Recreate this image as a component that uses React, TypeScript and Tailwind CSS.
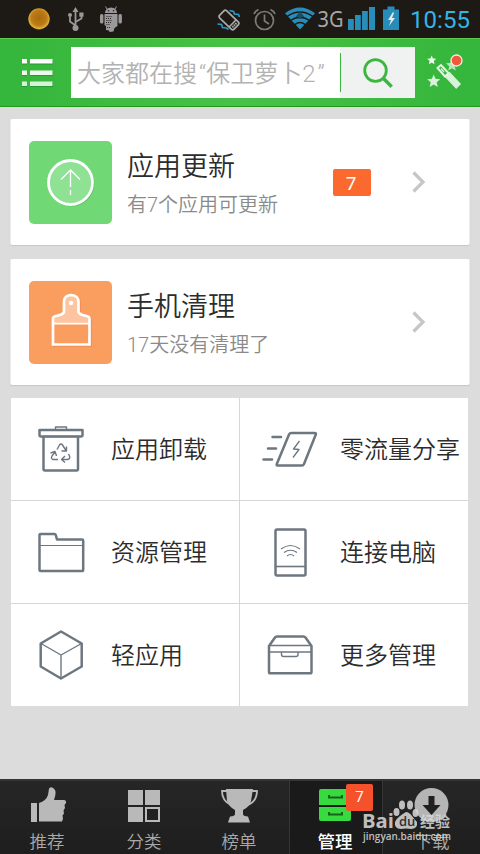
import React from "react";

const FONT = "font-['Roboto','Noto_Sans_CJK_SC',sans-serif]";

function StatusBar() {
  return (
    <div className="h-[38px] shrink-0 bg-[#1d1915]">
      <svg width="480" height="38" viewBox="0 0 480 38" fill="none">
        <defs>
          <radialGradient id="sun" cx="50%" cy="45%" r="55%">
            <stop offset="0" stopColor="#a96a12" />
            <stop offset="0.65" stopColor="#bd7c14" />
            <stop offset="0.9" stopColor="#e0b03a" />
            <stop offset="1" stopColor="#7a5a1c" />
          </radialGradient>
        </defs>
        <circle cx="39" cy="19" r="10.700" fill="url(#sun)" />
        <g stroke="#999" strokeWidth="1.800">
          <path d="M75.500 28V11M75.500 25.500l-5.500-4v-5M75.500 22l6-3.500v-3" />
        </g>
        <g fill="#999">
          <circle cx="75.500" cy="28" r="3" />
          <path d="M75.500 7l3 5h-6z" />
          <circle cx="70" cy="15" r="2" />
          <rect x="79.300" y="12.500" width="4.200" height="4.200" />
          <path d="M105 13a6 5.500 0 0 1 12 0z" />
          <rect x="100" y="14" width="3.400" height="9.500" rx="1.500" />
          <rect x="118.500" y="14" width="3.400" height="9.500" rx="1.500" />
          <path d="M104.500 14h13v12l-3 2-1 3.500-4 .5-.5-1.500-3-.5v-4l-1.500-1z" />
        </g>
        <path d="M107 9l-1.500-2.500M115 9l1.500-2.500" stroke="#999" strokeWidth="1" />
        <g fill="#2a2622">
          <circle cx="108.500" cy="10.700" r=".8" />
          <circle cx="113.500" cy="10.700" r=".8" />
        </g>
        <path d="M106.500 16.500h6M106 18.500h6M106.500 20.500h5M106 22.500h5M106.500 24.500h4M107 27.500h3" stroke="#2a2622" strokeDasharray="1 1" />
        <g transform="translate(229 20) rotate(-46)">
          <rect x="-5" y="-10" width="10" height="20" rx="2" stroke="#aaa" strokeWidth="1.700" />
          <path d="M-5 5H5" stroke="#aaa" strokeWidth="1.500" />
          <path d="M-3 7.500H3" stroke="#aaa" strokeWidth="2" strokeDasharray="1.500 .7" />
        </g>
        <path d="M229.500 10.500l4 1 1 2.500 4 .5 1 2.500M217.500 24l4 .5 1 3 4 .5 2 1.500" stroke="#2b9bc7" strokeWidth="1.700" />
        <g stroke="#7d7a77" strokeWidth="1.700">
          <circle cx="264.500" cy="20.500" r="9" />
          <path d="M264.500 14.500v6.500l4.500 3M254 14q1-3 4.500-4.500M275 14q-1-3-4.500-4.500" />
        </g>
        <path d="M300 29.500L285 13.200q15-11.400 30 0z" fill="#288eb9" />
        <path d="M287.500 16.200q12.500-8.500 25 0M291 20.200q9-6 18 0M295 24.300q5-3.400 10 0" stroke="#1d1915" strokeWidth="1.500" />
        <path d="M300 11l4.500 6h-3v2h-3v-2h-3z" fill="#174f65" />
        <text x="317.500" y="26.500" fill="#a8a6a4" fontFamily="Noto Sans" fontSize="22.500" textLength="26" lengthAdjust="spacingAndGlyphs">3G</text>
        <path d="M348 19h5.800v11H348zM355 15h5.800v15H355zM362 11h5.800v19H362zM369 7h6v23h-6z" fill="#288eb9" />
        <path d="M383 9.500h4.500V6.500h7v3h4.500V30h-16z" fill="#278cb8" />
        <path d="M393 12l-5 8h3l-2 6 6-8h-3l2-5z" fill="#e8e8e8" />
        <text x="410" y="27.500" fill="#33b5e5" fontFamily="Roboto" fontWeight="400" fontSize="24" textLength="60" lengthAdjust="spacing">10:55</text>
      </svg>
    </div>
  );
}

const STAR = "M0-5l1.400 3.300 3.600.3-2.700 2.400.8 3.600L0 2.700-3.100 4.600l.8-3.600L-5-1.400l3.600-.3z";

function Header() {
  return (
    <header className="flex h-[69px] shrink-0 items-start border-t border-b border-t-[#5dcc4d] border-b-[#219a1b] bg-linear-to-r from-[#34b53b] via-[#48c148] to-[#34b53b]">
      <svg className="mt-5 ml-5 shrink-0" width="36" height="32" viewBox="20 59 36 32">
        <g fill="#15852a" opacity=".55">
          <path d="M22 60h5v4.500h-5zM30 60h23v4.500H30zM22 71h5v5h-5zM30 71h23v5H30zM22 82h5v5h-5zM30 82h23v5H30z" />
        </g>
        <path d="M22 59h5v4.500h-5zM30 59h22.500v4.500H30z" fill="#fff" />
        <path d="M22 70.500h5V75h-5zM30 70.500h22.500V75H30z" fill="#eef9ee" />
        <path d="M22 81.500h5V86h-5zM30 81.500h22.500V86H30z" fill="#d8f1d9" />
      </svg>
      <div className="mt-2 ml-[15px] flex h-[51px] w-[344px]">
        <div className="flex w-[269px] items-center bg-white pt-0.5 pl-1.5">
          <span className="text-2xl leading-none font-[350] whitespace-nowrap text-[#b2b2b2]">
            大家都在搜<span className="pl-0.5">“</span>保卫萝卜<span className="tracking-[2px]">2”</span>
          </span>
        </div>
        <div className="flex flex-1 items-center bg-[#eff2f0]">
          <div className="h-[39px] w-px bg-[#3ab73e]" />
          <div className="flex flex-1 justify-center">
            <svg width="34" height="34" viewBox="0 0 34 34" fill="none" stroke="#3ab73e" strokeWidth="2.800">
              <circle cx="14.500" cy="14.500" r="10.800" />
              <path d="M22.500 22.500l8.200 8.300" strokeWidth="3.400" />
            </svg>
          </div>
        </div>
      </div>
      <svg className="mt-[11px] ml-3 shrink-0" width="38" height="44" viewBox="427 50 38 44">
        <g fill="#d9f3da">
          <path d={STAR} transform="translate(431.700 60) scale(.9)" fill="#f4fcf4" />
          <path d={STAR} transform="translate(433.700 81) scale(1.300)" />
          <path d={STAR} transform="translate(452 65) scale(1.200)" opacity=".8" />
          <path d="M444.500 76.500l5-4.800 11.500 12.300-4.800 5z" />
        </g>
        <path d="M437.500 68l3.500-3 7.500 8-3.500 3.500z" fill="#3cb843" stroke="#e4f6e4" strokeWidth="1.900" />
        <path d="M441 68.500l3 3.500" stroke="#e4f6e4" strokeWidth="1.200" />
        <circle cx="456.500" cy="60.500" r="5.500" fill="#f0593a" stroke="#eff5ec" strokeWidth="1.300" />
      </svg>
    </header>
  );
}

const UpdateIcon = () => (
  <svg width="83" height="83" viewBox="29 141 83 83" fill="none">
    <circle cx="71.500" cy="183.500" r="23" fill="#58c662" />
    <circle cx="70.500" cy="182.500" r="22" fill="#8fe294" stroke="#fff" strokeWidth="2.800" />
    <path d="M70.500 187v-17M61 179.500l9.500-9.500 9.500 9.500M70.500 190v5" stroke="#fff" strokeWidth="1.300" />
  </svg>
);

const BRUSH = "M64 301.500q0-6 7-6.500 7.500.5 7.500 7v9.500q0 2 3.500 3.200l6 1.800q1.500.5 1.500 2v26h-36.500v-26q0-1.500 1.500-2l6-1.800q3.500-1.200 3.500-3.200z";

const BrushIcon = () => (
  <svg width="83" height="83" viewBox="29 281 83 83" fill="none">
    <path d={BRUSH} transform="translate(1 1)" stroke="#e97c4e" strokeWidth="2.500" opacity=".6" />
    <path d={BRUSH} fill="#fa9e60" />
    <path d="M64 301.500q0-6 7-6.500 7.500.5 7.500 7v9.500q0 2 3.500 3.200l6 1.800q1.500.5 1.500 2v5h-36.500v-5q0-1.500 1.500-2l6-1.800q3.500-1.200 3.500-3.200z" fill="#fcc49f" />
    <path d={BRUSH} stroke="#fff" strokeWidth="2.700" />
    <path d="M53 323.700h37" stroke="#fff" strokeWidth="1.800" />
    <circle cx="71" cy="303" r="2.300" fill="#fff" />
  </svg>
);

const Chevron = () => (
  <svg width="14" height="22" viewBox="0 0 14 22" fill="none" stroke="#c6c6c6" strokeWidth="3.200">
    <path d="M1.500 1.500L11 11l-9.500 9.500" />
  </svg>
);

type CardProps = { title: string; sub: string; color: string; icon: React.ReactNode; count?: number };

function Card({ title, sub, color, icon, count }: CardProps) {
  return (
    <section className="flex h-[126px] items-center rounded-[2px] border-x border-[#ececec] bg-white pl-[18px] shadow-[0_1px_1px_#c8c8c8]">
      <div className={`size-[83px] shrink-0 overflow-hidden rounded-[5px] ${color}`}>{icon}</div>
      <div className="ml-[15px] flex w-[206px] flex-col pt-2 whitespace-nowrap">
        <h2 className="text-[27px] leading-[38px] font-[350] text-[#2c2c2c]">{title}</h2>
        <p className="text-xl leading-[38px] font-[350] text-[#8a8a8a]">{sub}</p>
      </div>
      <div className="flex w-[38px] justify-center">
        {count !== undefined && (
          <span className="w-[38px] rounded-[2px] bg-[#fc692e] pt-0.5 pr-0.5 text-center text-[19px] leading-[25px] text-white">{count}</span>
        )}
      </div>
      <div className="ml-[41px] flex">
        <Chevron />
      </div>
    </section>
  );
}

const lineProps = {
  width: 64,
  height: 60,
  fill: "none",
  stroke: "#6d7780",
  strokeWidth: 2.5,
  strokeLinejoin: "round" as const,
};

const TrashIcon = () => (
  <svg {...lineProps} viewBox="29 419 64 60">
    <path d="M39.500 430h43v5q0 1.500-1.500 1.500H41q-1.500 0-1.500-1.500zM43.500 437v32q0 1.500 1.500 1.500h31.500q1.500 0 1.500-1.500v-32" />
    <path d="M55.500 429v-2h11v2M43 436.500h36" strokeWidth="1.400" />
    <g strokeWidth="1.400">
      <path d="M57 449.500l2.500-4.500q1.500-2 3 0l3.500 5.500M61.500 451h5v-4.500M58 459.500h-5q-2.500-1-1-3.500l3-4M50.500 453l4.500-1.500 1.500 4.500M68.500 454l1 2q1 3-2 3.500H61.500M65 456l-3.500 3.500 3.500 3" />
    </g>
  </svg>
);

const ShareIcon = () => (
  <svg {...lineProps} viewBox="258 419 64 60">
    <path d="M291.500 433h23q2 0 1.300 1.500L304 464q-.7 1.500-2 1.500h-24.500q-1.300 0-.7-1.500L289 434.500q.7-1.500 2.500-1.500z" />
    <path d="M272.500 437h8.500M268 448.500h8M263.500 459.500h8.500" strokeLinecap="round" />
    <path d="M299.500 441l-6 8 5.500.5-6 8" strokeWidth="1.300" />
  </svg>
);

const FolderIcon = () => (
  <svg {...lineProps} viewBox="29 522 64 60">
    <path d="M39.500 535q0-1 1-1h14q1 0 1.300 1.200l1.200 4.300h25q1.200 0 1.200 1.200v29q0 1.300-1.200 1.300H40.500q-1 0-1-1.300z" />
    <path d="M40 545.500h43" strokeWidth="1.200" />
  </svg>
);

const PhoneIcon = () => (
  <svg {...lineProps} viewBox="258 522 64 60">
    <rect x="275.500" y="529.500" width="30" height="46" rx="1.500" />
    <path d="M276 566.500h29" strokeWidth="1.600" />
    <path d="M281 549q9.500-7 19 0M284 552.500q6.500-4.500 13 0M287 556q3.500-3 7 0" strokeWidth="1.200" />
  </svg>
);

const CubeIcon = () => (
  <svg {...lineProps} viewBox="29 625 64 60">
    <path d="M61 631.500l20.700 12v23L61 678.500l-20.300-12v-23z" />
    <path d="M41 643.500l20 11.500 20.500-11.500M61 655v23" strokeWidth="1.400" />
  </svg>
);

const BoxIcon = () => (
  <svg {...lineProps} viewBox="258 625 64 60">
    <path d="M269 646l6-8.500q.7-1 2-1h26.500q1.300 0 2 1l6 8.500v26q0 1.300-1.300 1.300h-40q-1.200 0-1.200-1.300z" />
    <path d="M269 645.500h42M269 652h42M281.500 652v2.500q0 2 2 2H296q2 0 2-2V652" strokeWidth="1.400" />
  </svg>
);

const TOOLS = [
  { label: "应用卸载", Icon: TrashIcon },
  { label: "零流量分享", Icon: ShareIcon },
  { label: "资源管理", Icon: FolderIcon },
  { label: "连接电脑", Icon: PhoneIcon },
  { label: "轻应用", Icon: CubeIcon },
  { label: "更多管理", Icon: BoxIcon },
];

function ToolGrid() {
  return (
    <section className="mt-[13px] ml-px grid w-[457px] grid-cols-[228px_228px] gap-px bg-[#d4d6d7]">
      {TOOLS.map(({ label, Icon }) => (
        <div key={label} className="flex h-[102px] items-center bg-white pl-[18px]">
          <Icon />
          <span className="ml-[18px] pt-0.5 text-2xl leading-8 font-[350] whitespace-nowrap text-[#2c2c2c]">{label}</span>
        </div>
      ))}
    </section>
  );
}

const TABS = [
  {
    label: "推荐",
    nudge: "",
    icon: (
      <svg width="44" height="38" viewBox="25 786 44 38" fill="#b9b9b9">
        <path d="M31 803h6v19h-6zM39 803q7-2 9-8l1-6.500q3-3 6 1.500 1.500 3-1 10h10q2.500 0 2 3l-1.500 2 .5 3-1.500 2.500.5 3-1.500 2 .5 3-1 3H39z" />
      </svg>
    ),
  },
  {
    label: "分类",
    nudge: "pl-1",
    icon: (
      <svg width="44" height="38" viewBox="122 786 44 38" fill="#b9b9b9">
        <path d="M128 790h15v15h-15zM145 790h15v15h-15zM128 807h15v15h-15z" />
        <path d="M146 808h13v13h-13z" fill="#202020" stroke="#b9b9b9" strokeWidth="2" />
      </svg>
    ),
  },
  {
    label: "榜单",
    nudge: "pr-px",
    icon: (
      <svg width="44" height="38" viewBox="217 786 44 38" fill="#b9b9b9">
        <path d="M226 789h27l-2 12q-1.500 6-8 9v4q0 2 5 2.500l2 6h-22l2-6q5-.5 5-2.500v-4q-6-3-8-9z" />
        <path d="M227 791h-5q0 10 9 14M252 791h5q0 10-9 14" fill="none" stroke="#b9b9b9" strokeWidth="1.800" />
      </svg>
    ),
  },
  {
    label: "管理",
    nudge: "pr-0.5",
    icon: (
      <svg width="44" height="38" viewBox="313 786 44 38">
        <path d="M321 789h28q2 0 2 2v14h-32v-14q0-2 2-2zM319 807h32v12q0 2-2 2h-28q-2 0-2-2z" fill="#38db3f" />
        <path d="M329 795v2.500h13V795M329 812v2.500h13V812" fill="none" stroke="#17631b" strokeWidth="2" />
      </svg>
    ),
  },
  {
    label: "下载",
    nudge: "pl-px",
    icon: (
      <svg width="44" height="38" viewBox="410 786 44 38">
        <circle cx="431.500" cy="805" r="17" fill="#b5b5b5" />
        <path d="M428.500 796h6v9h6l-9 10-9-10h6z" fill="#202020" />
      </svg>
    ),
  },
];

function Watermark() {
  return (
    <svg className="absolute top-[14px] left-[361px]" width="96" height="52" viewBox="361 795 96 52" fill="#d5d5d5" opacity=".88">
      <text x="362" y="828" fontFamily="Open Sans" fontWeight="700" fontSize="20" textLength="32" lengthAdjust="spacingAndGlyphs">Bai</text>
      <ellipse cx="396.500" cy="812" rx="3" ry="4" />
      <ellipse cx="402" cy="805" rx="3" ry="4.500" />
      <ellipse cx="410" cy="805" rx="3" ry="4.500" />
      <ellipse cx="415.500" cy="813" rx="3" ry="4" />
      <path d="M406 812q3 0 6 4t5 6q1 7-6 7-5-1-10 0-7 0-6-7 1-3 5-6t6-4z" />
      <text x="399" y="826" fontFamily="Open Sans" fontWeight="600" fontSize="13" fill="#333">du</text>
      <text x="420" y="827" fontFamily="Noto Sans CJK SC" fontWeight="700" fontSize="15" textLength="30">经验</text>
      <text x="363" y="840" fontFamily="Open Sans" fontWeight="600" fontSize="10.500" textLength="88" lengthAdjust="spacingAndGlyphs">jingyan.baidu.com</text>
    </svg>
  );
}

function TabBar() {
  return (
    <nav className="relative grid h-[75px] shrink-0 grid-cols-[94px_96px_99px_94px_97px] border-t-2 border-[#353535] bg-linear-to-b from-[#262626] to-[#1e1e1e]">
      {TABS.map(({ label, icon, nudge }, i) => (
        <div
          key={label}
          className={`flex flex-col items-center pt-[5px] ${nudge} ${i === 3 ? "border-x border-[#353535] bg-[#1a1a1a] text-white" : "text-[#a9a9a9]"}`}
        >
          <div className="relative">
            {icon}
            {i === 3 && (
              <span className="absolute -top-[2px] left-[33px] h-[27px] w-[27px] rounded-[2px] bg-[#f5522c] text-center text-[15px] leading-[27px] text-white">7</span>
            )}
          </div>
          <span className={`mt-1.5 text-[17.500px] leading-6 whitespace-nowrap ${i === 3 ? "font-medium" : "font-[350]"}`}>{label}</span>
        </div>
      ))}
      <Watermark />
    </nav>
  );
}

export default function App() {
  return (
    <div className={`flex h-[854px] w-[480px] flex-col overflow-hidden bg-[#dcdcdc] ${FONT}`}>
      <StatusBar />
      <Header />
      <main className="flex-1 px-2.5 pt-3">
        <Card title="应用更新" sub="有7个应用可更新" color="bg-[#70d975]" icon={<UpdateIcon />} count={7} />
        <div className="h-3.5" />
        <Card title="手机清理" sub="17天没有清理了" color="bg-[#fa9e60]" icon={<BrushIcon />} />
        <ToolGrid />
      </main>
      <TabBar />
    </div>
  );
}
